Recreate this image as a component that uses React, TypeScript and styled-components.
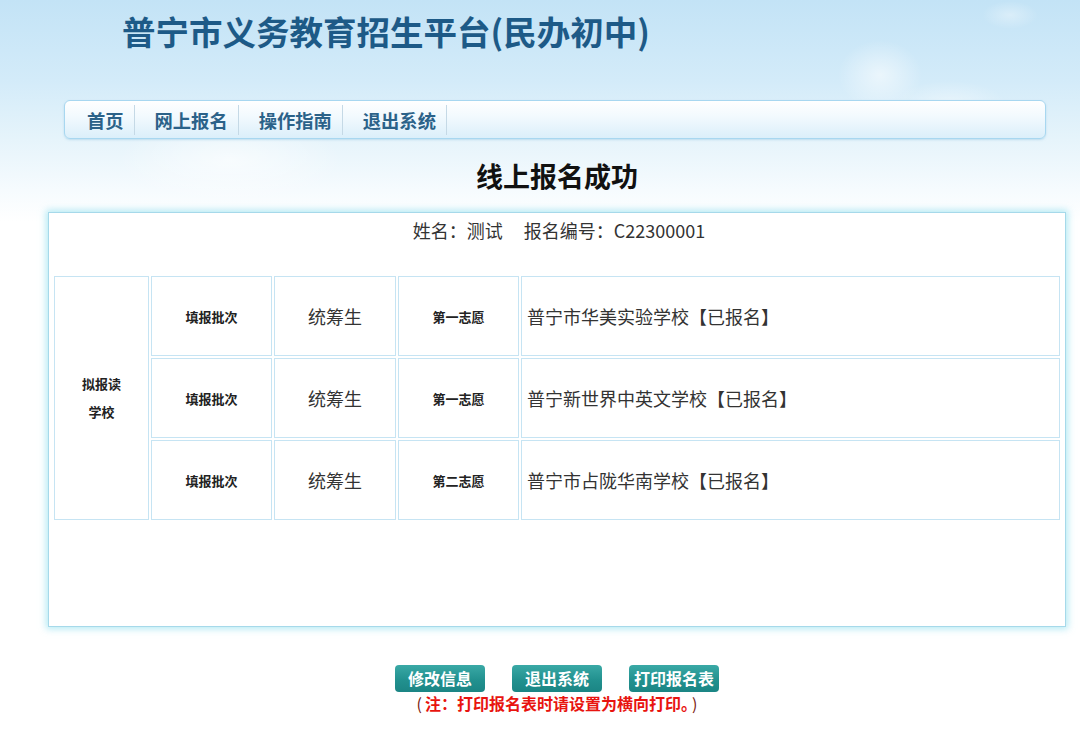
import React from "react"
import styled, { createGlobalStyle } from "styled-components"

const GlobalStyle = createGlobalStyle`
  html, body {
    margin: 0;
    padding: 0;
  }
  body {
    width: 1080px;
    min-height: 733px;
    font-family: "Noto Sans CJK SC", "Liberation Sans", sans-serif;
    color: #333;
    background:
      radial-gradient(ellipse 60px 50px at 880px 75px, rgba(255,255,255,0.55), rgba(255,255,255,0) 70%),
      radial-gradient(ellipse 80px 35px at 950px 105px, rgba(255,255,255,0.4), rgba(255,255,255,0) 70%),
      radial-gradient(ellipse 40px 20px at 1010px 15px, rgba(255,255,255,0.35), rgba(255,255,255,0) 70%),
      radial-gradient(ellipse 160px 60px at 230px 160px, rgba(255,255,255,0.6), rgba(255,255,255,0) 70%),
      linear-gradient(to bottom, #c3e3f6 0px, #d3ebf9 80px, #e6f4fb 140px, #f6fbfe 190px, #ffffff 222px);
    background-repeat: no-repeat;
  }
`

const Page = styled.div`
  width: 1018px;
  margin-left: 48px;
  display: flex;
  flex-direction: column;
`

const Header = styled.div`
  height: 100px;
  padding-left: 74px;
  box-sizing: border-box;
`

const SiteTitle = styled.h1`
  margin: 0;
  padding-top: 8px;
  font-size: 33.5px;
  line-height: 46px;
  font-weight: 700;
  color: #1d5a87;
`

const NavBar = styled.div`
  margin: 0 20px 0 16px;
  height: 39px;
  box-sizing: border-box;
  display: flex;
  align-items: center;
  padding-left: 2px;
  border: 1px solid #a8d7f0;
  border-radius: 6px;
  background: linear-gradient(to bottom, #ffffff 0%, #f1f9fe 45%, #dbeffa 100%);
  box-shadow: 0 1px 2px rgba(150, 200, 230, 0.5);
`

const NavItem = styled.a`
  display: flex;
  align-items: center;
  height: 30px;
  padding: 0 10px 0 20px;
  border-right: 1px solid #c5d9e6;
  font-size: 18.3px;
  font-weight: 700;
  color: #2b6289;
  text-decoration: none;
  cursor: pointer;
`

const Heading = styled.h2`
  margin: 0;
  height: 73px;
  display: flex;
  align-items: center;
  justify-content: center;
  font-size: 27px;
  font-weight: 700;
  color: #111;
`

const Panel = styled.div`
  border: 1px solid #a6d9ea;
  background: #fff;
  box-shadow: 0 0 7px 2px rgba(150, 225, 240, 0.7);
  padding: 6px 3px 106px;
  height: 415px;
  box-sizing: border-box;
`

const InfoLine = styled.div`
  display: flex;
  justify-content: center;
  gap: 21px;
  padding-left: 4px;
  font-size: 18px;
  line-height: 22px;
  color: #333;
  height: 55px;
`

const Table = styled.table`
  width: 100%;
  border-collapse: separate;
  border-spacing: 2px;
`

const Cell = styled.td<{ $w?: number; $big?: boolean; $left?: boolean }>`
  width: ${p => (p.$w ? `${p.$w}px` : "auto")};
  height: 78px;
  padding: 0 ${p => (p.$left ? "5px" : "0")};
  border: 1px solid #c6e4f3;
  text-align: ${p => (p.$left ? "left" : "center")};
  vertical-align: middle;
  font-size: ${p => (p.$big ? "18px" : "13px")};
  font-weight: ${p => (p.$big ? 400 : 700)};
  color: ${p => (p.$big ? "#333" : "#222")};
`

const SideCell = styled(Cell)`
  line-height: 28px;
`

const Actions = styled.div`
  margin-top: 38px;
  display: flex;
  justify-content: center;
  gap: 27px;
`

const ActionButton = styled.button`
  width: 90px;
  height: 27px;
  padding: 0;
  border: none;
  border-radius: 4px;
  background: linear-gradient(to bottom, #3aa9a6 0%, #22918f 55%, #1b8584 100%);
  color: #fff;
  font-family: inherit;
  font-size: 16px;
  font-weight: 700;
  line-height: 27px;
  cursor: pointer;
`

const Note = styled.div`
  text-align: center;
  margin-top: 1px;
  font-size: 16px;
  line-height: 21px;
  font-weight: 700;
  color: #e8140f;
`

const Paren = styled.span`
  font-weight: 400;
  color: #7a1a10;
  margin: 0 3px;
`

const navItems = ["首页", "网上报名", "操作指南", "退出系统"]

const choices = [
  { order: "第一志愿", school: "普宁市华美实验学校【已报名】" },
  { order: "第一志愿", school: "普宁新世界中英文学校【已报名】" },
  { order: "第二志愿", school: "普宁市占陇华南学校【已报名】" },
]

export default function App() {
  return (
    <>
      <GlobalStyle />
      <Page>
        <Header>
          <SiteTitle>普宁市义务教育招生平台(民办初中)</SiteTitle>
        </Header>

        <NavBar>
          {navItems.map(item => (
            <NavItem key={item}>{item}</NavItem>
          ))}
        </NavBar>

        <Heading>线上报名成功</Heading>

        <Panel>
          <InfoLine>
            <span>姓名：测试</span>
            <span>报名编号：C22300001</span>
          </InfoLine>
          <Table>
            <tbody>
              {choices.map((c, i) => (
                <tr key={i}>
                  {i === 0 && (
                    <SideCell $w={93} rowSpan={3}>
                      拟报读
                      <br />
                      学校
                    </SideCell>
                  )}
                  <Cell $w={119}>填报批次</Cell>
                  <Cell $w={120} $big>统筹生</Cell>
                  <Cell $w={119}>{c.order}</Cell>
                  <Cell $big $left>{c.school}</Cell>
                </tr>
              ))}
            </tbody>
          </Table>
        </Panel>

        <Actions>
          <ActionButton>修改信息</ActionButton>
          <ActionButton>退出系统</ActionButton>
          <ActionButton>打印报名表</ActionButton>
        </Actions>
        <Note>
          <Paren>(</Paren>注：打印报名表时请设置为横向打印。<Paren>)</Paren>
        </Note>
      </Page>
    </>
  )
}
